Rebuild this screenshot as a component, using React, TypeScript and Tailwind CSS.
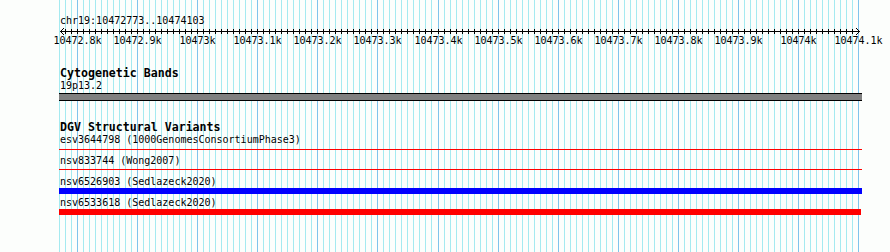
import React from "react";

// Genome browser view: ruler, cytoband track and DGV variants track
const START = 10472770;
const END = 10474100;
const pxAt = (bp: number) => Math.round(59 + (bp - START) * 0.6008) + 0.5;

const ticks: number[] = [];
for (let bp = START; bp <= END; bp += 10) ticks.push(bp);

const majors = ticks.filter((bp) => bp % 100 === 0);

const label = (bp: number) => {
  const k = bp / 1000;
  return `${Number.isInteger(k) ? k : k.toFixed(1)}k`;
};

function Grid() {
  return (
    <svg className="absolute inset-0" width={890} height={252} shapeRendering="crispEdges">
      {ticks.map((bp) => (
        <line
          key={bp}
          x1={pxAt(bp)}
          x2={pxAt(bp)}
          y1={0}
          y2={252}
          stroke={bp % 100 === 0 ? "#80c4ec" : "#a4eaf0"}
          strokeWidth={1}
        />
      ))}
      {/* ruler */}
      <line x1={60} x2={860} y1={31.5} y2={31.5} stroke="#000" strokeWidth={1} />
      <polyline points="64,28 60.5,31.5 64,35" fill="none" stroke="#000" strokeWidth={1} shapeRendering="auto" />
      <polyline points="856,28 859.5,31.5 856,35" fill="none" stroke="#000" strokeWidth={1} shapeRendering="auto" />
      {ticks
        .filter((bp) => bp > START && bp < END)
        .map((bp) => (
          <line key={bp} x1={pxAt(bp)} x2={pxAt(bp)} y1={29} y2={34} stroke="#000" strokeWidth={1} />
        ))}
    </svg>
  );
}

function FeatureLabel({ children, className = "" }: { children: React.ReactNode; className?: string }) {
  return <div className={`pl-[1px] h-[12px] whitespace-nowrap ${className}`}>{children}</div>;
}

export default function App() {
  return (
    <div className="relative w-[890px] h-[252px] overflow-hidden bg-[#fcfefc] text-black">
      <Grid />
      <div className="relative pl-[59px] font-['DejaVu_Sans_Mono',monospace] text-[10px] leading-[12px]">
        <div className="pt-[15px] pl-[1px] h-[27px]">chr19:10472773..10474103</div>
        <div className="relative h-[12px] mt-[8px] -ml-[59px]">
          {majors.map((bp) => (
            <span
              key={bp}
              className="absolute top-0 -translate-x-1/2 whitespace-nowrap"
              style={{ left: pxAt(bp) }}
            >
              {label(bp)}
            </span>
          ))}
        </div>

        <h2 className="mt-[20px] pl-[1px] h-[13px] text-[11.6px] leading-[13px] font-bold">Cytogenetic Bands</h2>
        <FeatureLabel>19p13.2</FeatureLabel>
        <div className="mt-[1px] h-[8px] w-[803px] border-y border-black bg-[#808080]" />

        <h2 className="mt-[20px] pl-[1px] h-[13px] text-[11.6px] leading-[13px] font-bold">DGV Structural Variants</h2>
        <FeatureLabel>esv3644798 (1000GenomesConsortiumPhase3)</FeatureLabel>
        <div className="mt-[3px] h-[1px] w-[803px] bg-[#ff0000]" />
        <FeatureLabel className="mt-[5px]">nsv833744 (Wong2007)</FeatureLabel>
        <div className="mt-[2px] h-[1px] w-[803px] bg-[#ff0000]" />
        <FeatureLabel className="mt-[6px]">nsv6526903 (Sedlazeck2020)</FeatureLabel>
        <div className="h-[6px] w-[803px] bg-[#0000ff]" />
        <FeatureLabel className="mt-[3px]">nsv6533618 (Sedlazeck2020)</FeatureLabel>
        <div className="h-[6px] w-[802px] bg-[#ff0000]" />
      </div>
    </div>
  );
}
